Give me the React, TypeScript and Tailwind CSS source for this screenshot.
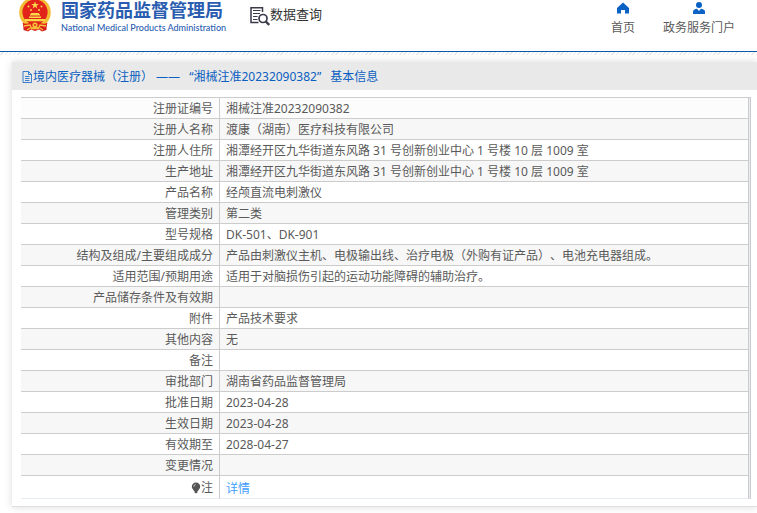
import React from "react";

type Row = { label: string; value: string };

const rows: Row[] = [
  { label: "注册证编号", value: "湘械注准20232090382" },
  { label: "注册人名称", value: "渡康（湖南）医疗科技有限公司" },
  { label: "注册人住所", value: "湘潭经开区九华街道东风路 31 号创新创业中心 1 号楼 10 层 1009 室" },
  { label: "生产地址", value: "湘潭经开区九华街道东风路 31 号创新创业中心 1 号楼 10 层 1009 室" },
  { label: "产品名称", value: "经颅直流电刺激仪" },
  { label: "管理类别", value: "第二类" },
  { label: "型号规格", value: "DK-501、DK-901" },
  { label: "结构及组成/主要组成成分", value: "产品由刺激仪主机、电极输出线、治疗电极（外购有证产品）、电池充电器组成。" },
  { label: "适用范围/预期用途", value: "适用于对脑损伤引起的运动功能障碍的辅助治疗。" },
  { label: "产品储存条件及有效期", value: "" },
  { label: "附件", value: "产品技术要求" },
  { label: "其他内容", value: "无" },
  { label: "备注", value: "" },
  { label: "审批部门", value: "湖南省药品监督管理局" },
  { label: "批准日期", value: "2023-04-28" },
  { label: "生效日期", value: "2023-04-28" },
  { label: "有效期至", value: "2028-04-27" },
  { label: "变更情况", value: "" },
];

function Emblem() {
  return (
    <svg viewBox="0 0 34 32" className="h-8 w-[34px] shrink-0" aria-hidden="true">
      <path d="M5 20 L5.500 30 L10 31.500 L13 29.500 L17 31 L21 29.500 L24 31.500 L28.500 30 L29 20Z" fill="#d8201f" />
      <ellipse cx="17" cy="12.500" rx="15.800" ry="15.500" fill="#f3bd35" />
      <ellipse cx="17" cy="12" rx="12.600" ry="12.500" fill="#e2231a" />
      <path d="M17 1.500l1 2.600h2.700l-2.200 1.700.8 2.600-2.300-1.600-2.300 1.600.8-2.600-2.200-1.700H16z" fill="#fbd84a" />
      <g fill="#fbd84a">
        <circle cx="10.500" cy="6.500" r="1" />
        <circle cx="13" cy="10" r="1" />
        <circle cx="21" cy="10" r="1" />
        <circle cx="23.500" cy="6.500" r="1" />
        <path d="M12 14.500l1.500-1.500h7l1.500 1.500v1H12zM11 16.500h12v1.500H11zM7 19h20v2.200H7z" />
      </g>
      <path d="M4.500 23c4 1.500 6 .5 9-1h7c3 1.500 5 2.500 9 1l-2 5-6-1h-9l-6 1z" fill="#e2231a" />
      <path d="M6 26l6-1 1.500 3.500h7L22 25l6 1M9 30l3-2M25 30l-3-2" stroke="#f5c33b" strokeWidth="1.300" fill="none" />
      <circle cx="17" cy="25" r="2.600" fill="#f5c33b" />
      <circle cx="17" cy="25" r="1" fill="#e2231a" />
    </svg>
  );
}

function QueryIcon() {
  return (
    <svg viewBox="0 0 20 20" className="h-5 w-5" fill="none" stroke="#3b3a4a" aria-hidden="true">
      <path d="M12.500 6V1.800H1v14.700h7.500" strokeWidth="1.500" />
      <path d="M3 4.500h7.500M3 7.500h7M3 10.500h4.500M3 13.500h4.500" strokeWidth="1" />
      <circle cx="13" cy="12.500" r="4" strokeWidth="1.700" />
      <path d="M15.800 15.500l3.400 3.500" strokeWidth="2.400" />
    </svg>
  );
}

function HomeIcon() {
  return (
    <svg viewBox="0 0 14 12" className="h-3 w-3.5" fill="#0a62c4" aria-hidden="true">
      <path d="M7 0.500L13 6V11.500H9V8H5V11.500H1V6z" strokeLinejoin="round" />
    </svg>
  );
}

function PersonIcon() {
  return (
    <svg viewBox="0 0 14 12" className="h-3 w-3.5" fill="#0a62c4" aria-hidden="true">
      <circle cx="7" cy="3" r="3" />
      <path d="M1 12V9.500C1 8 3 7 5 6.700L7 9l2-2.300C11 7 13 8 13 9.500V12z" />
    </svg>
  );
}

function DocIcon() {
  return (
    <svg viewBox="0 0 11 12" className="h-3 w-[11px]" fill="none" stroke="#0a62c4" aria-hidden="true">
      <path d="M1 .5h5.500L9.500 3.500v8H1zM6.500.5v3h3M3 5.500h4.500M3 7.500h4.500M3 9.500h4.500" strokeWidth=".8" />
    </svg>
  );
}

function BulbIcon() {
  return (
    <svg viewBox="0 0 10 12" className="h-3 w-2.5" fill="#555" aria-hidden="true">
      <path d="M5 .5a4.200 4.200 0 0 1 4.200 4.200C9.200 6.800 7.500 7.500 7 9H3C2.500 7.500.8 6.800.8 4.700A4.200 4.200 0 0 1 5 .5z" />
      <path d="M3.500 9h3v1.500L5 11.500l-1.500-1z" />
      <path d="M2.800 4.700a2.200 2.200 0 0 1 1.800-2.200" stroke="#fff" strokeWidth=".7" fill="none" />
    </svg>
  );
}

export default function App() {
  return (
    <div className="bg-white pb-2 font-['Noto_Sans','Noto_Sans_CJK_SC',sans-serif] text-xs text-[#5a5a5a] [text-spacing-trim:space-all]">
      <header className="flex h-[52px] items-start border-b border-[#0a57a8] pr-[22px] pl-[18px]">
        <a href="#" className="flex items-start gap-[9px] text-[#2a5db0]">
          <Emblem />
          <span className="flex flex-col whitespace-nowrap">
            <span className="text-lg leading-5 font-bold">国家药品监督管理局</span>
            <span className="font-['Lato',sans-serif] text-[9px] leading-[15px] font-medium">
              National Medical Products Administration
            </span>
          </span>
        </a>
        <a href="#" className="ml-6 flex items-center pt-1.5 text-[13px] leading-5 whitespace-nowrap text-[#333]">
          <QueryIcon />
          <span className="pb-1 leading-4">数据查询</span>
        </a>
        <nav className="ml-auto flex gap-7 pt-0.5 whitespace-nowrap">
          <a href="#" className="flex flex-col items-center gap-[5px]">
            <HomeIcon />
            <span className="leading-[18px]">首页</span>
          </a>
          <a href="#" className="flex flex-col items-center gap-[5px]">
            <PersonIcon />
            <span className="leading-[18px]">政务服务门户</span>
          </a>
        </nav>
      </header>
      <div className="h-[3px] bg-[repeating-linear-gradient(135deg,#fff_0_2px,#e6e9e4_2px_3px)]" />

      <main className="mt-[7px] ml-3 border-b border-[#e0e0e0] shadow-[0_0_8px_rgba(0,0,0,0.15)]">
        <h1 className="flex h-7 items-center bg-[#e9e9e9] pt-0.5 pl-2.5 whitespace-nowrap text-[#0a5fc0]">
          <DocIcon />
          <span className="flex gap-[9px]">
            <span>境内医疗器械（注册） ——</span>
            <span>“湘械注准20232090382”</span>
            <span>基本信息</span>
          </span>
        </h1>
        <div className="mt-[7px] mr-1.5 mb-[7px] ml-[9px] border-t border-r border-[#ccc] bg-[#e6ebf5] pr-px">
          <table className="w-full border-separate border-spacing-0 border-r border-[#ccc] bg-white">
            <tbody>
              {rows.map((row) => (
                <tr key={row.label} className="h-[21px] first:bg-[#fcfcfc] even:bg-[#f7f7f7]">
                  <th scope="row" className="w-[199px] border-r border-b border-[#ccc] pt-0.5 pr-1.5 pb-0 text-right leading-[18px] font-normal">
                    {row.label}
                  </th>
                  <td className="border-b border-[#ccc] pt-0.5 pb-0 pl-1.5 leading-[18px]">{row.value}</td>
                </tr>
              ))}
              <tr className="h-[23px]">
                <th scope="row" className="border-r border-b border-r-[#ccc] border-b-[#e6ebf5] pt-0.5 pr-1.5 pb-0 leading-5 font-normal">
                  <span className="flex items-center justify-end">
                    <BulbIcon />注
                  </span>
                </th>
                <td className="border-b border-[#e6ebf5] pt-1 pb-0 pl-1.5 leading-[18px]">
                  <a href="#" className="text-[#409eff]">详情</a>
                </td>
              </tr>
            </tbody>
          </table>
        </div>
      </main>
    </div>
  );
}
